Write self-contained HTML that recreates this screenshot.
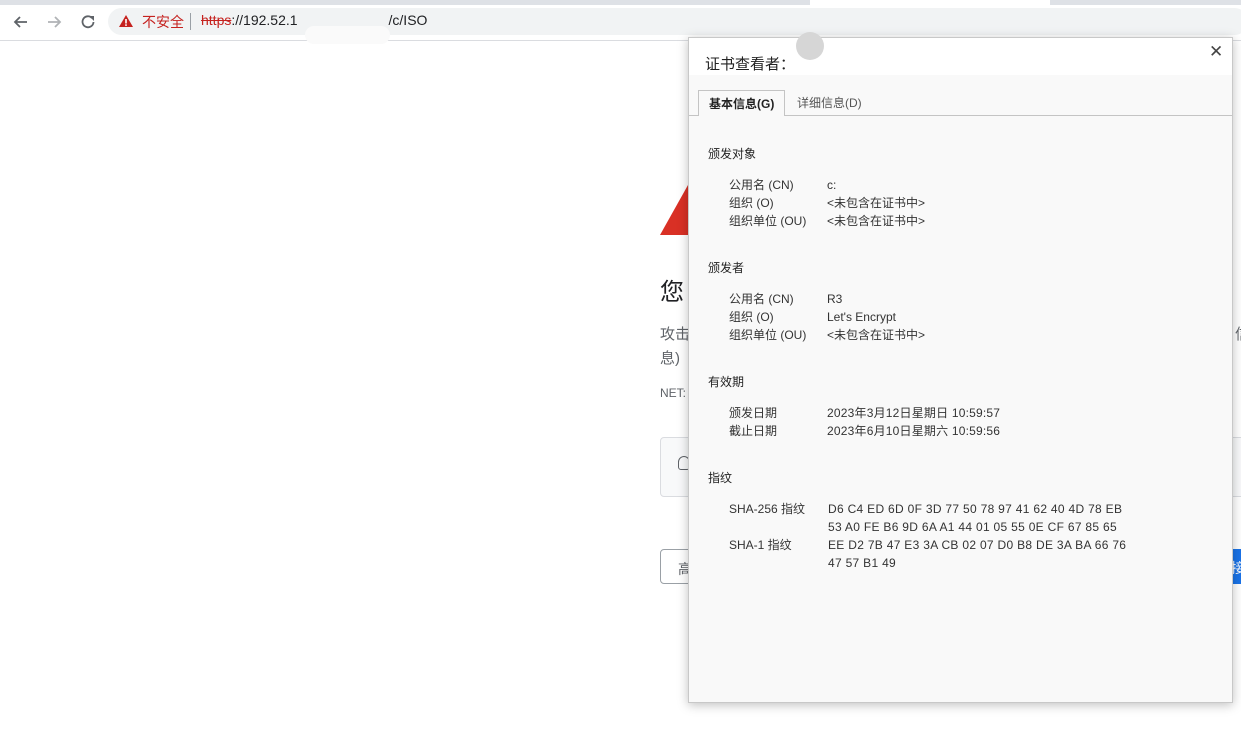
<!DOCTYPE html>
<html><head><meta charset="utf-8"><style>
*{margin:0;padding:0;box-sizing:border-box}
body{width:1241px;height:732px;overflow:hidden;background:#fff;font-family:"Liberation Sans","Noto Sans CJK SC",sans-serif;position:relative;color:#202124}
.abs{position:absolute}
.dlg{left:688px;top:37px;width:545px;height:666px;background:#f9f9f9;border:1px solid #c8c8c8;box-shadow:0 2px 10px rgba(0,0,0,.25)}
.dlg .t{font-size:12px;color:#333;position:absolute;line-height:18px}
.dlg .h{font-size:12px;color:#222;position:absolute}
</style></head><body>
<div class="abs" style="left:0;top:0;width:1241px;height:5px;background:#dee1e6"></div>
<div class="abs" style="left:810px;top:0;width:240px;height:5px;background:#fff"></div>
<div class="abs" style="left:0;top:40px;width:1241px;height:1px;background:#dadce0"></div>
<svg class="abs" style="left:12px;top:13px" width="90" height="18" viewBox="0 0 90 18">
<path d="M15 9H3M8 4L3 9l5 5" stroke="#5f6368" stroke-width="1.8" fill="none"/>
<path d="M36 9h12M43 4l5 5-5 5" stroke="#b0b3b6" stroke-width="1.8" fill="none"/>
<path d="M80 5a5.5 5.5 0 1 0 1.5 4" stroke="#5f6368" stroke-width="1.8" fill="none"/><path d="M77 3h5v5z" fill="#5f6368"/>
</svg>
<div class="abs" style="left:108px;top:8px;width:1140px;height:27px;border-radius:14px;background:#f1f3f4"></div>
<svg class="abs" style="left:118px;top:14px" width="16" height="14"><path d="M8 1L15 13H1z" fill="#c5221f"/><rect x="7.2" y="5" width="1.6" height="4.5" fill="#fff"/><rect x="7.2" y="10.3" width="1.6" height="1.6" fill="#fff"/></svg>
<div class="abs" style="left:142px;top:12px;font-size:14px;color:#c5221f">不安全</div>
<div class="abs" style="left:190px;top:13px;width:1px;height:17px;background:#9aa0a6"></div>
<div class="abs" style="left:201px;top:12px;font-size:14px;color:#202124"><span style="color:#c5221f;text-decoration:line-through">https</span>://192.52.1<span style="color:transparent">xxxxxxxxxxxxx</span>/c/ISO</div>
<div class="abs" style="left:305px;top:26px;width:85px;height:18px;border-radius:9px;background:#fafafa"></div>
<!-- background page -->
<svg class="abs" style="left:660px;top:185px" width="30" height="50"><path d="M28 0L0 50h30z" fill="#d93025"/></svg>
<div class="abs" style="left:660px;top:272px;font-size:24px">您</div>
<div class="abs" style="left:660px;top:323px;font-size:15px;color:#5f6368">攻击</div>
<div class="abs" style="left:660px;top:347px;font-size:15px;color:#5f6368">息)</div>
<div class="abs" style="left:1235px;top:323px;font-size:15px;color:#5f6368">信</div>
<div class="abs" style="left:660px;top:386px;font-size:12px;color:#5f6368">NET:</div>
<div class="abs" style="left:660px;top:437px;width:600px;height:60px;border:1px solid #dadce0;border-radius:4px;background:#f8f9fa"></div>
<div class="abs" style="left:678px;top:456px;width:12px;height:14px;border:1.5px solid #5f6368;border-radius:6px 6px 3px 3px"></div>
<div class="abs" style="left:660px;top:549px;width:60px;height:35px;border:1px solid #9aa0a6;border-radius:4px;font-size:14px;color:#5f6368;padding:9px 0 0 17px">高</div>
<div class="abs" style="left:1229px;top:549px;width:20px;height:35px;background:#1a73e8;border-radius:4px;color:#fff;font-size:14px;padding:9px 0 0 2px">接</div>
<!-- dialog -->
<div class="abs dlg">
<div class="abs" style="left:0;top:0;width:543px;height:37px;background:#fff"></div>
<div class="abs" style="left:16px;top:15px;font-size:15px;color:#222">证书查看者：</div>
<div class="abs" style="left:107px;top:-6px;width:28px;height:28px;border-radius:14px;background:#d6d6d6"></div>
<div class="abs" style="left:520px;top:4px;font-size:17px;color:#444">✕</div>
<div class="abs" style="left:0;top:77px;width:543px;height:1px;background:#c4c4c4"></div>
<div class="abs" style="left:9px;top:52px;width:87px;height:26px;border:1px solid #c4c4c4;border-bottom:none;background:#f9f9f9;font-size:12px;font-weight:bold;color:#222;padding:4px 0 0 10px">基本信息(G)</div>
<div class="abs" style="left:108px;top:56px;font-size:12px;color:#555">详细信息(D)</div>
<div class="h" style="left:19px;top:107px">颁发对象</div>
<div class="t" style="left:40px;top:138px">公用名 (CN)<br>组织 (O)<br>组织单位 (OU)</div>
<div class="t" style="left:138px;top:138px">c:<br>&lt;未包含在证书中&gt;<br>&lt;未包含在证书中&gt;</div>
<div class="h" style="left:19px;top:221px">颁发者</div>
<div class="t" style="left:40px;top:252px">公用名 (CN)<br>组织 (O)<br>组织单位 (OU)</div>
<div class="t" style="left:138px;top:252px">R3<br>Let's Encrypt<br>&lt;未包含在证书中&gt;</div>
<div class="h" style="left:19px;top:335px">有效期</div>
<div class="t" style="left:40px;top:366px">颁发日期<br>截止日期</div>
<div class="t" style="left:138px;top:366px;letter-spacing:0.2px">2023年3月12日星期日 10:59:57<br>2023年6月10日星期六 10:59:56</div>
<div class="h" style="left:19px;top:431px">指纹</div>
<div class="t" style="left:40px;top:462px">SHA-256 指纹<br><br>SHA-1 指纹</div>
<div class="t" style="left:139px;top:462px;letter-spacing:0.3px">D6 C4 ED 6D 0F 3D 77 50 78 97 41 62 40 4D 78 EB<br>53 A0 FE B6 9D 6A A1 44 01 05 55 0E CF 67 85 65<br>EE D2 7B 47 E3 3A CB 02 07 D0 B8 DE 3A BA 66 76<br>47 57 B1 49</div>
</div>
</body></html>
